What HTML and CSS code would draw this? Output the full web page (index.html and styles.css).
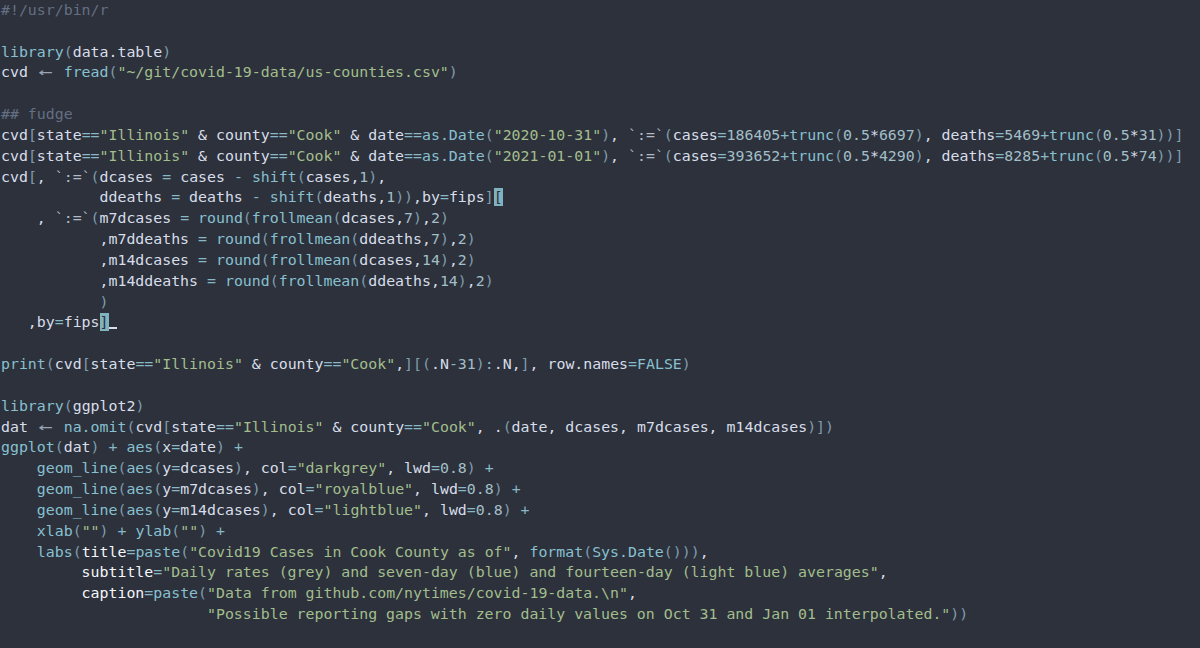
FILE: index.html
```html
<!DOCTYPE html>
<html lang="en">
<head>
<meta charset="utf-8">
<title>covid.r</title>
<link rel="stylesheet" href="styles.css">
</head>
<body>
<pre class="code"><span class="c">#!/usr/bin/r</span>

<span class="f">library</span><span class="p">(</span>data.table<span class="p">)</span>
cvd <span class="arr">←</span> <span class="f">fread</span><span class="p">(</span><span class="s">"~/git/covid-19-data/us-counties.csv"</span><span class="p">)</span>

<span class="c">## fudge</span>
cvd<span class="p">[</span>state<span class="o">==</span><span class="s">"Illinois"</span> &amp; county<span class="o">==</span><span class="s">"Cook"</span> &amp; date<span class="o">==</span><span class="f">as.Date</span><span class="p">(</span><span class="s">"2020-10-31"</span><span class="p">)</span>, <span class="b">`:=`</span><span class="p">(</span>cases<span class="o">=</span><span class="n">186405</span><span class="o">+</span><span class="f">trunc</span><span class="p">(</span><span class="n">0.5</span>*<span class="n">6697</span><span class="p">)</span>, deaths<span class="o">=</span><span class="n">5469</span><span class="o">+</span><span class="f">trunc</span><span class="p">(</span><span class="n">0.5</span>*<span class="n">31</span><span class="p">))]</span>
cvd<span class="p">[</span>state<span class="o">==</span><span class="s">"Illinois"</span> &amp; county<span class="o">==</span><span class="s">"Cook"</span> &amp; date<span class="o">==</span><span class="f">as.Date</span><span class="p">(</span><span class="s">"2021-01-01"</span><span class="p">)</span>, <span class="b">`:=`</span><span class="p">(</span>cases<span class="o">=</span><span class="n">393652</span><span class="o">+</span><span class="f">trunc</span><span class="p">(</span><span class="n">0.5</span>*<span class="n">4290</span><span class="p">)</span>, deaths<span class="o">=</span><span class="n">8285</span><span class="o">+</span><span class="f">trunc</span><span class="p">(</span><span class="n">0.5</span>*<span class="n">74</span><span class="p">))]</span>
cvd<span class="p">[</span>, <span class="b">`:=`</span><span class="p">(</span>dcases <span class="o">=</span> cases <span class="o">-</span> <span class="f">shift</span><span class="p">(</span>cases,<span class="n">1</span><span class="p">)</span>,
           ddeaths <span class="o">=</span> deaths <span class="o">-</span> <span class="f">shift</span><span class="p">(</span>deaths,<span class="n">1</span><span class="p">))</span>,by<span class="o">=</span>fips<span class="p">]</span><span class="match">[</span>
    , <span class="b">`:=`</span><span class="p">(</span>m7dcases <span class="o">=</span> <span class="f">round</span><span class="p">(</span><span class="f">frollmean</span><span class="p">(</span>dcases,<span class="n">7</span><span class="p">)</span>,<span class="n">2</span><span class="p">)</span>
           ,m7ddeaths <span class="o">=</span> <span class="f">round</span><span class="p">(</span><span class="f">frollmean</span><span class="p">(</span>ddeaths,<span class="n">7</span><span class="p">)</span>,<span class="n">2</span><span class="p">)</span>
           ,m14dcases <span class="o">=</span> <span class="f">round</span><span class="p">(</span><span class="f">frollmean</span><span class="p">(</span>dcases,<span class="n">14</span><span class="p">)</span>,<span class="n">2</span><span class="p">)</span>
           ,m14ddeaths <span class="o">=</span> <span class="f">round</span><span class="p">(</span><span class="f">frollmean</span><span class="p">(</span>ddeaths,<span class="n">14</span><span class="p">)</span>,<span class="n">2</span><span class="p">)</span>
           <span class="p">)</span>
   ,by<span class="o">=</span>fips<span class="match">]</span><span class="cursor"> </span>

<span class="f">print</span><span class="p">(</span>cvd<span class="p">[</span>state<span class="o">==</span><span class="s">"Illinois"</span> &amp; county<span class="o">==</span><span class="s">"Cook"</span>,<span class="p">][(</span>.N<span class="o">-</span><span class="n">31</span><span class="p">)</span><span class="o">:</span>.N,<span class="p">]</span>, row.names<span class="o">=</span><span class="k">FALSE</span><span class="p">)</span>

<span class="f">library</span><span class="p">(</span>ggplot2<span class="p">)</span>
dat <span class="arr">←</span> <span class="f">na.omit</span><span class="p">(</span>cvd<span class="p">[</span>state<span class="o">==</span><span class="s">"Illinois"</span> &amp; county<span class="o">==</span><span class="s">"Cook"</span>, .<span class="p">(</span>date, dcases, m7dcases, m14dcases<span class="p">)])</span>
<span class="f">ggplot</span><span class="p">(</span>dat<span class="p">)</span> <span class="o">+</span> <span class="f">aes</span><span class="p">(</span>x<span class="o">=</span>date<span class="p">)</span> <span class="o">+</span>
    <span class="f">geom_line</span><span class="p">(</span><span class="f">aes</span><span class="p">(</span>y<span class="o">=</span>dcases<span class="p">)</span>, col<span class="o">=</span><span class="s">"darkgrey"</span>, lwd<span class="o">=</span><span class="n">0.8</span><span class="p">)</span> <span class="o">+</span>
    <span class="f">geom_line</span><span class="p">(</span><span class="f">aes</span><span class="p">(</span>y<span class="o">=</span>m7dcases<span class="p">)</span>, col<span class="o">=</span><span class="s">"royalblue"</span>, lwd<span class="o">=</span><span class="n">0.8</span><span class="p">)</span> <span class="o">+</span>
    <span class="f">geom_line</span><span class="p">(</span><span class="f">aes</span><span class="p">(</span>y<span class="o">=</span>m14dcases<span class="p">)</span>, col<span class="o">=</span><span class="s">"lightblue"</span>, lwd<span class="o">=</span><span class="n">0.8</span><span class="p">)</span> <span class="o">+</span>
    <span class="f">xlab</span><span class="p">(</span><span class="s">""</span><span class="p">)</span> <span class="o">+</span> <span class="f">ylab</span><span class="p">(</span><span class="s">""</span><span class="p">)</span> <span class="o">+</span>
    <span class="f">labs</span><span class="p">(</span><span class="a">title</span><span class="o">=</span><span class="f">paste</span><span class="p">(</span><span class="s">"Covid19 Cases in Cook County as of"</span>, <span class="f">format</span><span class="p">(</span><span class="f">Sys.Date</span><span class="p">()))</span>,
         <span class="a">subtitle</span><span class="o">=</span><span class="s">"Daily rates (grey) and seven-day (blue) and fourteen-day (light blue) averages"</span>,
         <span class="a">caption</span><span class="o">=</span><span class="f">paste</span><span class="p">(</span><span class="s">"Data from github.com/nytimes/covid-19-data.\n"</span>,
                       <span class="s">"Possible reporting gaps with zero daily values on Oct 31 and Jan 01 interpolated."</span><span class="p">))</span>
</pre>
</body>
</html>
```

FILE: styles.css
```css
html, body {
  margin: 0;
  padding: 0;
  background: #2c313c;
  height: 100%;
  overflow: hidden;
}

.code {
  margin: 0;
  padding: 0 0 0 1px;
  font-family: "DejaVu Sans Mono", "Liberation Mono", monospace;
  font-size: 14.88px;
  line-height: 20.83px;
  color: #d8dee9;
  white-space: pre;
}

.c { color: #656f83; }
.f { color: #88c0d0; }
.p { color: #7f9cad; }
.o { color: #88b8c6; }
.s { color: #a3be8c; }
.n { color: #a2bfc7; }
.b { color: #b2bac6; }
.k { color: #88c0d0; }
.a { color: #f4f6f9; }

.arr {
  display: inline-block;
  width: 2ch;
  text-align: center;
  color: #9aa4b4;
  transform: scaleX(1.6);
}

.match {
  background: #7fb3c0;
  color: #2c313c;
}

.cursor {
  display: inline-block;
  width: 1ch;
  height: 17px;
  vertical-align: top;
  border-bottom: 2px solid #d8dee9;
  box-sizing: border-box;
}
```
